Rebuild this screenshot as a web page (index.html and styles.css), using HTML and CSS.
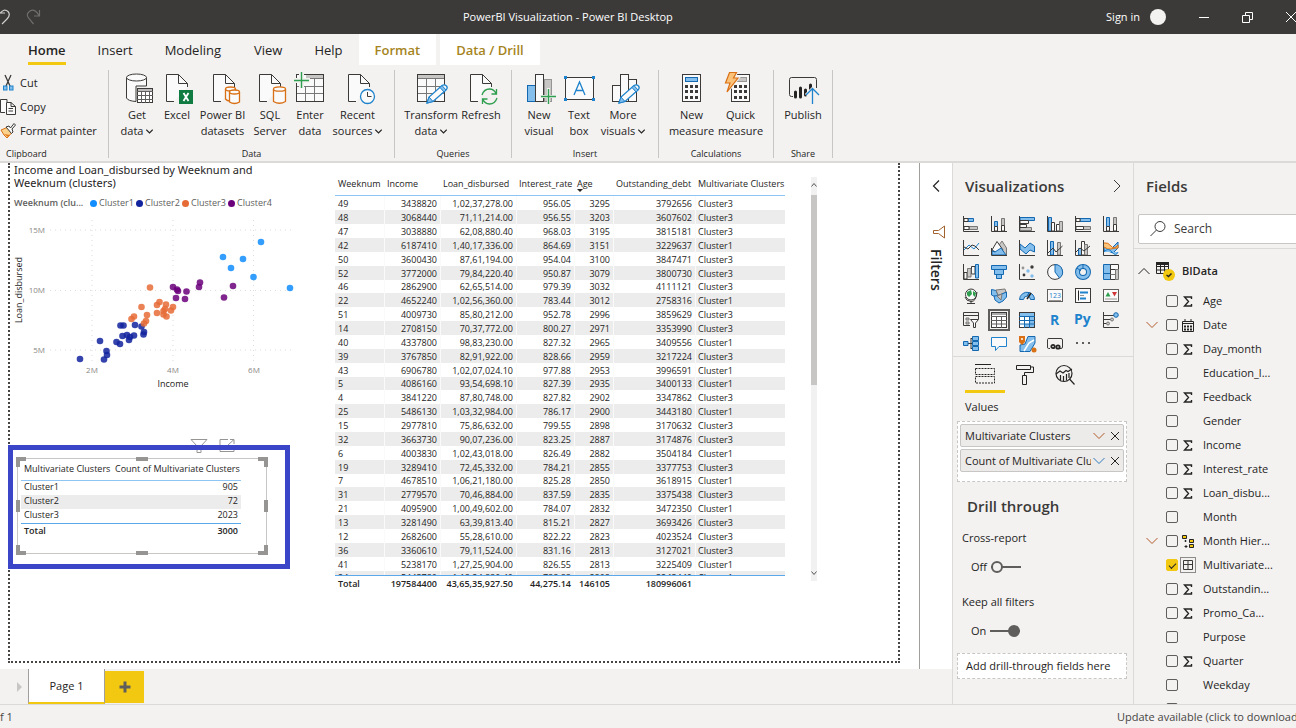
FILE: index.html
```html
<!DOCTYPE html>
<html lang="en">
<head>
<meta charset="utf-8">
<title>PowerBI Visualization - Power BI Desktop</title>
<link rel="stylesheet" href="styles.css">
</head>
<body>
<svg class="defs" aria-hidden="true">
  <symbol id="doc" viewBox="0 0 34 32"><path d="M14 29.5H6.500V2.500H18.500L27.500 11.500V15" fill="#fafafa" stroke="#3b3a39"/><path d="M18.500 2.500V11.500H27.500" fill="none" stroke="#3b3a39"/></symbol>
  <symbol id="pencil" viewBox="0 0 22 20"><path d="M1 19L3 13L16 1.500Q18.500 0 20.500 2Q22 4 20 6L7 17.500Z" fill="#fafafa" stroke="#1e83cc" stroke-width="1.300"/><path d="M3 13L7 17.500L1 19ZM16 1.500L20 6L18 8L14 3.500Z" fill="#83beec" stroke="#1e83cc"/></symbol>
  <symbol id="chev" viewBox="0 0 12 8"><path d="M.5 1L6 6.500L11.500 1" fill="none" stroke="currentColor"/></symbol>
  <symbol id="sigma" viewBox="0 0 10 11"><path d="M8.500 3V1H1.500L5.500 5.500L1.500 10H8.500V8" fill="none" stroke="#252423" stroke-width="1.400"/></symbol>
  <symbol id="cross" viewBox="0 0 10 10"><path d="M1 1L9 9M9 1L1 9" fill="none" stroke="currentColor"/></symbol>
</svg>

<header class="titlebar">
  <div class="history">
    <button class="plain" aria-label="Undo"><svg width="12" height="18"><path d="M0 5H5M0 5.500Q4 0 8 3.500Q11 7 7 11L2 16" fill="none" stroke="#d0cfce" stroke-width="1.200"/></svg></button>
    <button class="plain" aria-label="Redo"><svg width="16" height="18"><path d="M13.500 2V8H8M13 7.500Q9 0 4 3Q-.5 6 2.500 10L7.500 16" fill="none" stroke="#6f6e6d" stroke-width="1.200"/></svg></button>
  </div>
  <h1>PowerBI Visualization - Power BI Desktop</h1>
  <div class="window-tools">
    <button class="plain signin">Sign in</button><span class="avatar"></span>
    <button class="plain" aria-label="Minimize"><svg width="10" height="10"><path d="M0 5.500H10" stroke="#fff"/></svg></button>
    <button class="plain" aria-label="Restore"><svg width="11" height="11"><path d="M.5 3.500H7.500V10.500H.5ZM3.500 3V.5H10.500V7.500H8" fill="none" stroke="#fff"/></svg></button>
    <button class="plain" aria-label="Close"><svg width="10" height="10"><path d="M0 0L10 10M10 0L0 10" stroke="#fff"/></svg></button>
  </div>
</header>

<nav class="tabs">
  <button class="tab active"><span>Home</span></button><button class="tab">Insert</button><button class="tab">Modeling</button><button class="tab view">View</button><button class="tab">Help</button><button class="tab context">Format</button><button class="tab context">Data / Drill</button>
</nav>

<section class="ribbon">
  <div class="group clipboard">
    <div class="stack">
      <button class="row-tool"><svg width="16" height="16"><path d="M5 0L10 11M11 0L6 11" stroke="#3b3a39" stroke-width="1.300"/><rect x="3.500" y="11" width="3.500" height="4" fill="#83beec" stroke="#1e83cc"/><rect x="9.500" y="11" width="3.500" height="4" fill="#83beec" stroke="#1e83cc"/></svg>Cut</button>
      <button class="row-tool"><svg width="16" height="16"><path d="M5 13.500H.5V.5H7V3M6.500 3.500H11L15.500 7.500V15.500H6.500ZM11 3.500V7.500H15.500M8.500 9.500H13M8.500 12H13" fill="#fafafa" stroke="#3b3a39"/></svg>Copy</button>
      <button class="row-tool"><svg width="16" height="16"><path d="M1 7L7 4.500L11.500 10L7 15Q4 13 1 7Z" fill="#fbd28b" stroke="#d97015"/><path d="M4 11L8 14L10 12Z" fill="#e07a1c"/><path d="M6 4L9 3L10.500 5L14 .5L15.500 2L12 6L13 9L11.500 10.500Z" fill="#fafafa" stroke="#3b3a39"/></svg>Format painter</button>
    </div>
    <h2>Clipboard</h2>
  </div>
  <div class="group data">
    <div class="tools">
      <button class="tool"><svg width="34" height="32"><path d="M6.500 5.500V26Q8 29 16 29.500V14H26.500V5.500" fill="#fafafa" stroke="#3b3a39"/><ellipse cx="16.500" cy="5.500" rx="10" ry="3.500" fill="#fafafa" stroke="#3b3a39"/><rect x="17.500" y="16.500" width="15" height="14" fill="#fff" stroke="#3b3a39"/><path d="M18 18H32" stroke="#bbb" stroke-width="2"/><path d="M17 19.500H33M17 23.500H33M17 27.500H33M21.500 20V31M25.500 20V31M29.500 20V31" stroke="#605e5c"/></svg><span>Get</span><span>data <svg class="caret"><use href="#chev"/></svg></span></button>
      <button class="tool"><svg width="34" height="32"><use href="#doc"/><rect x="19" y="18" width="14" height="14" fill="#107c41"/><path d="M23.500 21L28.500 29M28.500 21L23.500 29" stroke="#fff" stroke-width="1.800"/></svg><span>Excel</span></button>
      <button class="tool pbi"><svg width="34" height="32"><use href="#doc" x="1"/><g fill="#fafafa" stroke="#d97015" stroke-width="1.300"><path d="M19.500 17V27Q21 29 24 29V17"/><ellipse cx="24.500" cy="17" rx="5" ry="2"/><path d="M23.500 20V30Q28.500 33 33.500 30V20"/><ellipse cx="28.500" cy="20" rx="5" ry="2"/></g></svg><span>Power BI</span><span>datasets</span></button>
      <button class="tool sql"><svg width="34" height="32"><use href="#doc"/><g fill="#fafafa" stroke="#d97015" stroke-width="1.300"><path d="M20.500 17V29.500Q26.500 33 32.500 29.500V17"/><ellipse cx="26.500" cy="17" rx="6" ry="2.200"/></g></svg><span>SQL</span><span>Server</span></button>
      <button class="tool enter"><svg width="34" height="32"><rect x="3.500" y="2.500" width="27" height="27" fill="#fafafa" stroke="#3b3a39"/><path d="M13 4.500H30" stroke="#c8c6c4" stroke-width="3"/><path d="M4 14.500H30M4 21.500H30M12.500 14V29M21.500 6V29M13 6.500H30" stroke="#777"/><path d="M0 8.500H17M8.500 0V16" stroke="#f3f2f1" stroke-width="5"/><path d="M1 8.500H16M8.500 0V16" stroke="#2f9e4f" stroke-width="1.400"/></svg><span>Enter</span><span>data</span></button>
      <button class="tool recent"><svg width="34" height="32"><use href="#doc" x="1"/><circle cx="26.500" cy="24.500" r="7" fill="#fafafa" stroke="#1e83cc" stroke-width="1.300"/><path d="M26.500 20V24.500H30.500" fill="none" stroke="#3b3a39"/></svg><span>Recent</span><span>sources <svg class="caret"><use href="#chev"/></svg></span></button>
    </div>
    <h2>Data</h2>
  </div>
  <div class="group queries">
    <div class="tools">
      <button class="tool transform"><svg width="34" height="32"><rect x="3.500" y="2.500" width="27" height="27" fill="#fafafa" stroke="#3b3a39"/><path d="M4 4.500H30" stroke="#c8c6c4" stroke-width="3"/><path d="M4 6.500H30M4 14.500H30M4 21.500H30M12.500 7V29M21.500 7V29" stroke="#777"/><use href="#pencil" x="12" y="12" width="22" height="20"/></svg><span>Transform</span><span>data <svg class="caret"><use href="#chev"/></svg></span></button>
      <button class="tool sql"><svg width="34" height="32"><use href="#doc"/><circle cx="25.500" cy="24.500" r="9" fill="#f3f2f1"/><path d="M18 23Q20 17 25.500 17Q30 17 32 21.500M32.500 17V22H27.500M33 26Q31 32 25.500 32Q20.500 31.500 19 27.500M18.500 32V27H23.500" fill="none" stroke="#2f9e4f" stroke-width="1.300"/></svg><span>Refresh</span></button>
    </div>
    <h2>Queries</h2>
  </div>
  <div class="group insert">
    <div class="tools">
      <button class="tool"><svg width="34" height="32"><rect x="22.500" y="7.500" width="7" height="22" fill="#c8c6c4" stroke="#979593"/><rect x="5.500" y="13.500" width="8" height="16" fill="#83beec" stroke="#1468b0"/><rect x="13.500" y="2.500" width="8" height="27" fill="#fafafa" stroke="#3b3a39"/><path d="M18 24.500H34M26.500 16V32" stroke="#f3f2f1" stroke-width="3"/><path d="M19 24.500H34M26.500 17V32" stroke="#2f9e4f" stroke-width="1.400"/></svg><span>New</span><span>visual</span></button>
      <button class="tool"><svg width="34" height="32"><rect x="3.500" y="5.500" width="28" height="22" fill="#fafafa" stroke="#3b3a39"/><g fill="#1e83cc"><path d="M2 4h3v3h-3zM30 4h3v3h-3zM2 26h3v3h-3zM30 26h3v3h-3z"/></g><path d="M12 23L17.500 10L23 23M14 18.500H21" fill="none" stroke="#1e83cc" stroke-width="1.300"/></svg><span>Text</span><span>box</span></button>
      <button class="tool more"><svg width="34" height="32"><g fill="#fafafa" stroke="#3b3a39"><rect x="22.500" y="7.500" width="8" height="22"/><rect x="6.500" y="13.500" width="8" height="16"/><rect x="14.500" y="2.500" width="8" height="27"/></g><use href="#pencil" x="12" y="12" width="22" height="20"/></svg><span>More</span><span>visuals <svg class="caret"><use href="#chev"/></svg></span></button>
    </div>
    <h2>Insert</h2>
  </div>
  <div class="group calc">
    <div class="tools">
      <button class="tool measure"><svg width="34" height="32"><rect x="7.500" y="2.500" width="18" height="27" fill="#fafafa" stroke="#3b3a39"/><rect x="10.500" y="5.500" width="12" height="4" fill="#83beec" stroke="#1468b0"/><path d="M10 14.500H23M10 19.500H23M10 25.500H23" stroke="#3b3a39" stroke-width="3" stroke-dasharray="3 2"/></svg><span>New</span><span>measure</span></button>
      <button class="tool measure"><svg width="34" height="32"><rect x="7.500" y="2.500" width="18" height="27" fill="#fafafa" stroke="#3b3a39"/><rect x="10.500" y="5.500" width="12" height="4" fill="#c8c6c4" stroke="#979593"/><path d="M10 14.500H23M10 19.500H23M10 25.500H23" stroke="#3b3a39" stroke-width="3" stroke-dasharray="3 2"/><path d="M5.500 .5H12.500L9.500 6H14L3 20L6 11H1.500Z" fill="#fbc37a" stroke="#f3f2f1" stroke-width="3"/><path d="M5.500 .5H12.500L9.500 6H14L3 20L6 11H1.500Z" fill="#fbc37a" stroke="#d97015" stroke-width="1.200"/></svg><span>Quick</span><span>measure</span></button>
    </div>
    <h2>Calculations</h2>
  </div>
  <div class="group share">
    <div class="tools">
      <button class="tool"><svg width="34" height="32"><path d="M7 24.500H5.500Q3.500 24.500 3.500 22.500V7.500Q3.500 5.500 5.500 5.500H28.500Q30.500 5.500 30.500 7.500V16" fill="none" stroke="#3b3a39"/><path d="M9.500 20V25M14.500 16V25M19.500 18V23M24.500 13V17" stroke="#252423" stroke-width="3" stroke-linecap="round"/><path d="M26.500 32V17M20 23L26.500 16.500L33 23" fill="none" stroke="#f3f2f1" stroke-width="3"/><path d="M26.500 32V17M20 23L26.500 16.500L33 23" fill="none" stroke="#1e83cc" stroke-width="1.300"/></svg><span>Publish</span></button>
    </div>
    <h2>Share</h2>
  </div>
</section>

<main class="workspace">
  <div class="report">
    <div class="upper">
      <div class="stage">
        <div class="page">
          <section class="visual scatter">
            <h3>Income and Loan_disbursed by Weeknum and Weeknum (clusters)</h3>
            <div class="legend"><b>Weeknum (clu...</b><span class="k c1">Cluster1</span><span class="k c2">Cluster2</span><span class="k c3">Cluster3</span><span class="k c4">Cluster4</span></div>
            <svg class="plot" viewBox="10 55 290 175" role="img" aria-label="Scatter chart">
              <path d="M50 70H294M50 130.500H294M50 190H294M92 60V204M173 60V204M253.500 60V204" stroke="#dcdcdc" stroke-dasharray="1 4" fill="none"/>
              <g class="tick"><text x="45" y="73">15M</text><text x="45" y="133">10M</text><text x="45" y="193">5M</text></g>
              <g class="tick mid"><text x="92" y="213">2M</text><text x="173" y="213">4M</text><text x="254" y="213">6M</text></g>
              <text class="axis" x="173" y="227">Income</text>
              <text class="axis" transform="translate(22 130) rotate(-90)">Loan_disbursed</text>
              <g class="d1"><circle cx="261" cy="82" r="3.300"/><circle cx="223" cy="97" r="3.300"/><circle cx="243" cy="99" r="3.300"/><circle cx="231" cy="108" r="3.300"/><circle cx="253.500" cy="117" r="3.300"/><circle cx="290" cy="128" r="3.300"/></g>
              <g class="d4"><circle cx="173" cy="127" r="3.300"/><circle cx="177" cy="129.500" r="3.300"/><circle cx="178" cy="131" r="3.300"/><circle cx="176" cy="138" r="3.300"/><circle cx="186.500" cy="131.500" r="3.300"/><circle cx="185" cy="139" r="3.300"/><circle cx="200" cy="122.500" r="3.300"/><circle cx="199" cy="127" r="3.300"/><circle cx="233" cy="126" r="3.300"/><circle cx="224" cy="137.500" r="3.300"/></g>
              <g class="d2"><circle cx="80" cy="199" r="3.300"/><circle cx="100" cy="181" r="3.300"/><circle cx="104" cy="199.500" r="3.300"/><circle cx="106.500" cy="191" r="3.300"/><circle cx="107" cy="195" r="3.300"/><circle cx="116.500" cy="182" r="3.300"/><circle cx="120" cy="184" r="3.300"/><circle cx="120.500" cy="165.500" r="3.300"/><circle cx="123.500" cy="165.500" r="3.300"/><circle cx="122.500" cy="176" r="3.300"/><circle cx="127" cy="175" r="3.300"/><circle cx="130" cy="177" r="3.300"/><circle cx="129" cy="180" r="3.300"/><circle cx="134" cy="175.500" r="3.300"/><circle cx="135" cy="165" r="3.300"/><circle cx="141.500" cy="166.500" r="3.300"/><circle cx="144" cy="172" r="3.300"/><circle cx="143.500" cy="174.500" r="3.300"/></g>
              <g class="d3"><circle cx="150" cy="127.500" r="3.300"/><circle cx="141.500" cy="147" r="3.300"/><circle cx="131.500" cy="159" r="3.300"/><circle cx="134" cy="156.500" r="3.300"/><circle cx="147" cy="155" r="3.300"/><circle cx="146" cy="161" r="3.300"/><circle cx="144" cy="163.500" r="3.300"/><circle cx="157" cy="145" r="3.300"/><circle cx="159.500" cy="142" r="3.300"/><circle cx="157" cy="153" r="3.300"/><circle cx="166" cy="144.500" r="3.300"/><circle cx="165" cy="149" r="3.300"/><circle cx="163.500" cy="151" r="3.300"/><circle cx="163.500" cy="154.500" r="3.300"/><circle cx="166.500" cy="156.500" r="3.300"/><circle cx="171" cy="150.500" r="3.300"/><circle cx="173" cy="147" r="3.300"/></g>
            </svg>
          </section>

          <section class="visual matrix">
            <div class="grid-scroll">
              <table class="grid">
                <colgroup><col class="w1"><col class="w2"><col class="w3"><col class="w4"><col class="w5"><col class="w6"><col class="w7"></colgroup>
                <thead><tr><th>Weeknum</th><th>Income</th><th>Loan_disbursed</th><th>Interest_rate</th><th class="sorted">Age</th><th>Outstanding_debt</th><th>Multivariate Clusters</th></tr></thead>
                <tbody>
                <tr><td>49</td><td>3438820</td><td>1,02,37,278.00</td><td>956.05</td><td>3295</td><td>3792656</td><td>Cluster3</td></tr>
                <tr><td>48</td><td>3068440</td><td>71,11,214.00</td><td>956.55</td><td>3203</td><td>3607602</td><td>Cluster3</td></tr>
                <tr><td>47</td><td>3038880</td><td>62,08,880.40</td><td>968.03</td><td>3195</td><td>3815181</td><td>Cluster3</td></tr>
                <tr><td>42</td><td>6187410</td><td>1,40,17,336.00</td><td>864.69</td><td>3151</td><td>3229637</td><td>Cluster1</td></tr>
                <tr><td>50</td><td>3600430</td><td>87,61,194.00</td><td>954.04</td><td>3100</td><td>3847471</td><td>Cluster3</td></tr>
                <tr><td>52</td><td>3772000</td><td>79,84,220.40</td><td>950.87</td><td>3079</td><td>3800730</td><td>Cluster3</td></tr>
                <tr><td>46</td><td>2862900</td><td>62,65,514.00</td><td>979.39</td><td>3032</td><td>4111121</td><td>Cluster3</td></tr>
                <tr><td>22</td><td>4652240</td><td>1,02,56,360.00</td><td>783.44</td><td>3012</td><td>2758316</td><td>Cluster1</td></tr>
                <tr><td>51</td><td>4009730</td><td>85,80,212.00</td><td>952.78</td><td>2996</td><td>3859629</td><td>Cluster3</td></tr>
                <tr><td>14</td><td>2708150</td><td>70,37,772.00</td><td>800.27</td><td>2971</td><td>3353990</td><td>Cluster3</td></tr>
                <tr><td>40</td><td>4337800</td><td>98,83,230.00</td><td>827.32</td><td>2965</td><td>3409556</td><td>Cluster1</td></tr>
                <tr><td>39</td><td>3767850</td><td>82,91,922.00</td><td>828.66</td><td>2959</td><td>3217224</td><td>Cluster3</td></tr>
                <tr><td>43</td><td>6906780</td><td>1,02,07,024.10</td><td>977.88</td><td>2953</td><td>3996591</td><td>Cluster1</td></tr>
                <tr><td>5</td><td>4086160</td><td>93,54,698.10</td><td>827.39</td><td>2935</td><td>3400133</td><td>Cluster1</td></tr>
                <tr><td>4</td><td>3841220</td><td>87,80,748.00</td><td>827.82</td><td>2902</td><td>3347862</td><td>Cluster3</td></tr>
                <tr><td>25</td><td>5486130</td><td>1,03,32,984.00</td><td>786.17</td><td>2900</td><td>3443180</td><td>Cluster1</td></tr>
                <tr><td>15</td><td>2977810</td><td>75,86,632.00</td><td>799.55</td><td>2898</td><td>3170632</td><td>Cluster3</td></tr>
                <tr><td>32</td><td>3663730</td><td>90,07,236.00</td><td>823.25</td><td>2887</td><td>3174876</td><td>Cluster3</td></tr>
                <tr><td>6</td><td>4003830</td><td>1,02,43,018.00</td><td>826.49</td><td>2882</td><td>3504184</td><td>Cluster1</td></tr>
                <tr><td>19</td><td>3289410</td><td>72,45,332.00</td><td>784.21</td><td>2855</td><td>3377753</td><td>Cluster3</td></tr>
                <tr><td>7</td><td>4678510</td><td>1,06,21,180.00</td><td>825.28</td><td>2850</td><td>3618915</td><td>Cluster1</td></tr>
                <tr><td>31</td><td>2779570</td><td>70,46,884.00</td><td>837.59</td><td>2835</td><td>3375438</td><td>Cluster3</td></tr>
                <tr><td>21</td><td>4095900</td><td>1,00,49,602.00</td><td>784.07</td><td>2832</td><td>3472350</td><td>Cluster1</td></tr>
                <tr><td>13</td><td>3281490</td><td>63,39,813.40</td><td>815.21</td><td>2827</td><td>3693426</td><td>Cluster3</td></tr>
                <tr><td>12</td><td>2682600</td><td>55,28,610.00</td><td>822.22</td><td>2823</td><td>4023524</td><td>Cluster3</td></tr>
                <tr><td>36</td><td>3360610</td><td>79,11,524.00</td><td>831.16</td><td>2813</td><td>3127021</td><td>Cluster3</td></tr>
                <tr><td>41</td><td>5238170</td><td>1,27,25,904.00</td><td>826.55</td><td>2813</td><td>3225409</td><td>Cluster1</td></tr>
                <tr><td>24</td><td>5443780</td><td>1,18,24,880.40</td><td>788.88</td><td>2808</td><td>3243440</td><td>Cluster1</td></tr>
                </tbody>
                <tfoot><tr><td>Total</td><td>197584400</td><td>43,65,35,927.50</td><td>44,275.14</td><td>146105</td><td>180996061</td><td></td></tr></tfoot>
              </table>
            </div>
            <div class="scrollbar"><svg width="6" height="4"><path d="M.5 3.500L3 .5L5.500 3.500" fill="none" stroke="#555"/></svg><i></i><svg width="6" height="4"><path d="M.5 .5L3 3.500L5.500 .5" fill="none" stroke="#555"/></svg></div>
          </section>

          <div class="visual-tools">
            <svg width="18" height="18"><path d="M1 3.500H17L11 10V16.500H7V10Z" fill="none" stroke="#979593"/></svg>
            <svg width="16" height="18"><path d="M9 3.500H1V15.500H15V11M11 3.500H15V8M15 3.500L9 9M5 12.500L8 9.500" fill="none" stroke="#979593"/></svg>
          </div>
          <section class="visual summary">
            <i class="handle nw"></i><i class="handle ne"></i><i class="handle sw"></i><i class="handle se"></i><i class="handle wide north"></i><i class="handle wide south"></i><i class="handle tall east"></i><i class="handle tall west"></i>
            <table class="grid small">
              <thead><tr><th>Multivariate Clusters</th><th>Count of Multivariate Clusters</th></tr></thead>
              <tbody><tr><td>Cluster1</td><td>905</td></tr><tr><td>Cluster2</td><td>72</td></tr><tr><td>Cluster3</td><td>2023</td></tr></tbody>
              <tfoot><tr><td>Total</td><td>3000</td></tr></tfoot>
            </table>
          </section>
          <div class="highlight"></div>
        </div>
      </div>
      <aside class="filters">
        <button class="plain" aria-label="Expand filters"><svg width="8" height="12"><path d="M7 .5L1.500 6L7 11.500" fill="none" stroke="#252423" stroke-width="1.200"/></svg></button>
        <svg class="funnel" width="12" height="14"><path d="M11.500 1V13L5.500 8.500H.5V5.500H5.500Z" fill="none" stroke="#a0622f"/></svg>
        <h2>Filters</h2>
      </aside>
    </div>
    <footer class="pagetabs">
      <span class="next"></span>
      <button class="pagetab">Page 1</button>
      <button class="add" aria-label="New page"><svg width="12" height="12"><path d="M6 .5V11.500M.5 6H11.500" stroke="#605e5c" stroke-width="3"/></svg></button>
    </footer>
  </div>

  <aside class="viz">
    <header class="pane-head"><h2>Visualizations</h2><button class="plain" aria-label="Collapse"><svg width="8" height="14"><path d="M1 1L7 7L1 13" fill="none" stroke="#3b3a39"/></svg></button></header>
    <div class="gallery">
      <svg viewBox="0 0 16 16"><path d="M5 2.500H10.500V5.500H5Z" class="b"/><path d="M6 10.500H14.500V13.500H6Z" class="g"/><path d="M1 2.500H5V5.500H1ZM1 10.500H6V13.500H1Z" class="f"/><path d="M.5 0V15.500H16" class="l"/></svg>
      <svg viewBox="0 0 16 16"><path d="M3.500 5.500H6.500V10.500H3.500Z" class="b"/><path d="M10.500 2.500H13.500V9.500H10.500Z" class="g"/><path d="M3.500 10.500H6.500V15H3.500ZM10.500 9.500H13.500V15H10.500Z" class="f"/><path d="M.5 0V15.500H16" class="l"/></svg>
      <svg viewBox="0 0 16 16"><path d="M1 1.500H15.500V4.500H1Z" class="b"/><path d="M1 4.500H9.500V7.500H1Z" class="f"/><path d="M1 11.500H12.500V14.500H1Z" class="g"/><path d="M1 8.500H7.500V11.500H1Z" class="f"/><path d="M.5 0V15.500H16" class="l"/></svg>
      <svg viewBox="0 0 16 16"><path d="M1.500 1.500H4.500V15H1.500Z" class="b"/><path d="M4.500 6.500H7.500V15H4.500ZM9.500 8.500H12.500V15H9.500Z" class="f"/><path d="M12.500 5.500H15.500V15H12.500Z" class="g"/><path d="M.5 0V15.500H16" class="l"/></svg>
      <svg viewBox="0 0 16 16"><path d="M5 2.500H15.500V5.500H5Z" class="b"/><path d="M8.500 10.500H15.500V13.500H8.500Z" class="g"/><path d="M1 2.500H5V5.500H1ZM1 10.500H8.500V13.500H1Z" class="f"/><path d="M.5 0V15.500H16" class="l"/></svg>
      <svg viewBox="0 0 16 16"><path d="M3.500 1.500H6.500V10.500H3.500Z" class="b"/><path d="M10.500 1.500H13.500V8.500H10.500Z" class="g"/><path d="M3.500 10.500H6.500V15H3.500ZM10.500 8.500H13.500V15H10.500Z" class="f"/><path d="M.5 0V15.500H16" class="l"/></svg>

      <svg viewBox="0 0 16 16"><path d="M1 10L6 5L11 9L16 3" fill="none" stroke="#1e83cc"/><path d="M1 7L5 9L9 5L12 6L16 10" class="l"/><path d="M.5 0V15.500H16" class="l"/></svg>
      <svg viewBox="0 0 16 16"><path d="M5 9L11 1L15.500 8V15H5Z" class="g"/><path d="M1 10L6 1.500L12 10L8 14Z" class="f"/><path d="M1 11L4 12L10 8L15 15H1Z" class="b"/><path d="M.5 8V15.500H16" class="l"/></svg>
      <svg viewBox="0 0 16 16"><path d="M1 4L6 8L11 3L15.500 6V12L11 10L7 14L1 9Z" class="b"/><path d="M.5 0V15.500H16" class="l"/></svg>
      <svg viewBox="0 0 16 16"><path d="M3.500 1.500H6.500V15H3.500Z" class="b"/><path d="M10.500 2.500H13.500V15H10.500Z" class="g"/><path d="M1 13L6 8L9 12L15.500 6" class="l"/><path d="M.5 0V15.500H16" class="l"/></svg>
      <svg viewBox="0 0 16 16"><path d="M3.500 8.500H6.500V15H3.500Z" class="b"/><path d="M6.500 1.500H9.500V15H6.500Z" class="f"/><path d="M9.500 4.500H12.500V15H9.500Z" class="g"/><path d="M1 12L5 8L9 11L15 6" class="l"/><path d="M.5 0V15.500H16" class="l"/></svg>
      <svg viewBox="0 0 16 16"><path d="M1 5H5L9 8L15 2V8L10 13L5 11H1Z" class="b"/><path d="M1 3Q5 2 8 6T15 5V8Q11 8 8 9T1 7" fill="#fbc37a" stroke="#d97015"/><path d="M1 12Q5 7 9 12T15 12" fill="#83beec" stroke="#1e83cc"/><path d="M.5 0V15.500H16" class="l"/></svg>

      <svg viewBox="0 0 16 16"><path d="M1 8.500H4V15H1ZM8.500 2.500H12V10H8.500Z" class="f"/><path d="M4.500 4.500H8V13H4.500Z" class="g"/><path d="M12.500 .5H15.500V14H12.500Z" class="b"/><path d="M.5 0V15.500H16" class="l"/></svg>
      <svg viewBox="0 0 16 16"><path d="M.5 1.500H15.500V5.500H.5ZM3.500 5.500H12.500V10.500H3.500ZM5.500 10.500H10.500V14.500H5.500Z" class="b"/></svg>
      <svg viewBox="0 0 16 16"><circle cx="4" cy="4" r="1.400" fill="#979593"/><circle cx="9" cy="7" r="1.700" fill="#83beec"/><circle cx="13" cy="3" r="1.700" fill="#3b3a39"/><circle cx="5" cy="11" r="1.400" fill="#3b3a39"/><circle cx="13" cy="12" r="1.700" fill="#83beec"/><path d="M.5 0V15.500H16" class="l"/></svg>
      <svg viewBox="0 0 16 16"><circle cx="8" cy="8" r="7.400" class="f"/><path d="M8 .6A7.400 7.400 0 0 1 12.500 14L8 8Z" class="b"/></svg>
      <svg viewBox="0 0 16 16"><circle cx="8" cy="8" r="5.500" fill="none" stroke="#1468b0" stroke-width="5"/><circle cx="8" cy="8" r="5.500" fill="none" stroke="#83beec" stroke-width="3"/><path d="M2 4L6 7M8 0V5" stroke="#1468b0"/></svg>
      <svg viewBox="0 0 16 16"><path d="M.5 .5H7.500V15.500H.5Z" class="b"/><path d="M7.500 .5H15.500V5.500H7.500ZM7.500 5.500H12.500V15.500H7.500Z" class="f"/><path d="M12.500 5.500H15.500V15.500H12.500ZM7.500 10.500H12.500" class="g"/><path d="M0 9.500H7" stroke="#1468b0"/></svg>

      <svg viewBox="0 0 16 16"><circle cx="8" cy="6.500" r="5.500" fill="#fafafa" stroke="#3b3a39"/><path d="M4 4L8 2L9 6L6 9L4 7ZM10 3L13 5L12 9L10 7Z" fill="#2f9e4f"/><path d="M2 9Q3 13 8 13.500T14 4M8 13V15.500M4 15.500H12" class="l"/></svg>
      <svg viewBox="0 0 16 16"><path d="M.5 1.500L5 2.500L7 7L5 9L.5 7Z" class="b"/><path d="M5 2L14 1L15 4L9 8L7 7Z" class="g"/><path d="M3 8L7 7.500L15.500 4V9L12 13L8 15L4 12Z" class="b"/><path d="M6 8L11 6L10 12Z" class="g"/></svg>
      <svg viewBox="0 0 16 16"><path d="M.5 11.500A7.500 7.500 0 0 1 10 4.500L8.500 8A4 4 0 0 0 4.500 11.500Z" class="b"/><path d="M10 4.500A7.500 7.500 0 0 1 15.500 11.500H11.500A4 4 0 0 0 8.500 8Z" class="b"/><path d="M8 11L12 5" stroke="#252423" stroke-width="1.500"/></svg>
      <svg viewBox="0 0 16 16"><rect x=".5" y="1.500" width="15" height="12" fill="#fafafa" stroke="#605e5c"/><text x="2" y="10" class="num">123</text><path d="M2 12.500H14" stroke="#979593"/></svg>
      <svg viewBox="0 0 16 16"><rect x=".5" y=".5" width="15" height="14" fill="#fafafa" stroke="#3b3a39"/><path d="M3.500 2.500V12.500" stroke="#252423"/><path d="M5 4.500H13M5 10.500H11" stroke="#1e83cc" stroke-width="2"/><path d="M5 7.500H9" stroke="#979593"/></svg>
      <svg viewBox="0 0 16 16"><rect x=".5" y="1.500" width="15" height="12" fill="#fafafa" stroke="#605e5c"/><path d="M2.500 8.500L5 4L7.500 8.500Z" fill="#2f9e4f"/><path d="M9 4H14L11.500 8.500Z" fill="#d13438"/><path d="M2 11H14" stroke="#979593"/></svg>

      <svg viewBox="0 0 16 16"><path d="M7 13.500H.5V.5H15.500V7M.5 3.500H15.500" class="l"/><path d="M3 6H6V8H3ZM3 10H6V12H3Z" class="g"/><path d="M7.500 7.500H15.500L12.500 11V15.500H10.500V11Z" class="f"/></svg>
      <svg class="picked" viewBox="0 0 16 16"><rect x=".5" y=".5" width="15" height="15" fill="#fff" stroke="#3b3a39"/><path d="M1 2H15" stroke="#aaa" stroke-width="2"/><path d="M0 4.500H16M0 8.500H16M0 12H16M5.500 4V16M10.500 4V16" stroke="#605e5c"/></svg>
      <svg viewBox="0 0 16 16"><rect x=".5" y=".5" width="15" height="15" fill="#fff" stroke="#3b3a39"/><path d="M1 1H15V4H1ZM10.500 4H15V15H10.500ZM5.500 12H10.500V15H5.500Z" fill="#83beec"/><path d="M0 4.500H16M0 8.500H16M0 12H16M5.500 4V16M10.500 4V16" stroke="#1468b0"/></svg>
      <svg viewBox="0 0 16 16"><text x="3" y="13" class="letter">R</text></svg>
      <svg viewBox="0 0 16 16"><text x="-1" y="12" class="letter">Py</text></svg>
      <svg viewBox="0 0 16 16"><path d="M.5 0V15.500H16M1 3.500H12M1 7.500H8M1 11.500H4" class="l"/><circle cx="13" cy="3" r="2.300" fill="#83beec" stroke="#1468b0"/><circle cx="9" cy="7.500" r="1.500" class="g"/><circle cx="5" cy="11.500" r="1.500" class="g"/></svg>

      <svg viewBox="0 0 16 16"><path d="M4 7.500H8M8 2V13M8 2.500H10M8 7.500H10M8 12.500H10" class="l"/><path d="M.5 5.500H5V9.500H.5ZM9.500 .5H15.500V4.500H9.500ZM9.500 5.500H15.500V9.500H9.500ZM9.500 10.500H15.500V14.500H9.500Z" class="b"/></svg>
      <svg viewBox="0 0 16 16"><path d="M.5 1.500H15.500V10.500H8L4.500 14.500V10.500H.5Z" fill="#fafafa" stroke="#1e83cc"/></svg>
      <svg viewBox="0 0 16 16"><path d="M1 9L6 8L9 .5H16V7L11 15.500H1Z" class="b"/><path d="M5 15L10 7L15 4" fill="none" stroke="#fff" stroke-width="1.500"/><path d="M0 0H6V6L3 9L0 6Z" fill="#d97015"/><circle cx="3" cy="3" r="1" fill="#fff"/><circle cx="15" cy="14" r="2.500" fill="#d97015"/></svg>
      <svg viewBox="0 0 16 16"><path d="M3 12.500H1.500Q.5 12.500 .5 11V3.500Q.5 2.500 2 2.500H14Q15.500 2.500 15.500 4V11Q15.500 12.500 14 12.500H13" class="l"/><circle cx="6" cy="10.500" r="1.700" fill="#fff" stroke="#252423" stroke-width="1.800"/><circle cx="11" cy="11" r="1.700" fill="#fff" stroke="#252423" stroke-width="1.800"/></svg>
      <svg viewBox="0 0 16 16"><path d="M1 6h2v2h-2zM7 6h2v2h-2zM13 6h2v2h-2z" fill="#605e5c"/></svg>
    </div>

    <div class="modes">
      <button class="plain mode on" aria-label="Fields"><svg width="20" height="20"><path d="M0 .5H16" stroke="#252423"/><path d="M.5 4.500H19.500V10.500H.5ZM.5 12.500H19.500V19H.5Z" fill="none" stroke="#252423" stroke-dasharray="2 1"/></svg></button>
      <button class="plain mode" aria-label="Format"><svg width="20" height="22"><path d="M1.500 1.500H15.500V5.500H1.500ZM15.500 3H18.500V8.500H9.500V11M7.500 11.500H11.500V20.500H7.500Z" fill="none" stroke="#252423"/></svg></button>
      <button class="plain mode" aria-label="Analytics"><svg width="20" height="20"><circle cx="9" cy="8.500" r="8" fill="none" stroke="#252423" stroke-width="1.200"/><path d="M1 9L5 6L8 8L11 5.500L13 6.500L17 4M5.500 10V15M8.500 11V16M11.500 9V15.500M14 8V13M14.500 14L19.500 19.500" fill="none" stroke="#252423" stroke-width="1.200"/></svg></button>
    </div>
    <h3 class="label">Values</h3>
    <div class="well">
      <div class="pill"><span>Multivariate Clusters</span><svg class="dn"><use href="#chev"/></svg><svg class="x"><use href="#cross"/></svg></div>
      <div class="pill"><span>Count of Multivariate Clusters</span><svg class="dn blue"><use href="#chev"/></svg><svg class="x"><use href="#cross"/></svg></div>
    </div>
    <h2 class="through">Drill through</h2>
    <h3 class="sub">Cross-report</h3>
    <label class="toggle">Off <input type="checkbox"></label>
    <h3 class="sub">Keep all filters</h3>
    <label class="toggle">On <input type="checkbox" checked></label>
    <div class="drop">Add drill-through fields here</div>
  </aside>

  <aside class="fields">
    <header class="pane-head"><h2>Fields</h2></header>
    <label class="search"><svg width="16" height="16"><circle cx="10" cy="5.500" r="5" fill="none" stroke="#3b3a39"/><path d="M6.500 9L.5 15" stroke="#3b3a39"/></svg><input type="text" placeholder="Search" aria-label="Search"></label>
    <div class="tree">
      <div class="root"><svg class="up"><use href="#chev"/></svg><svg width="20" height="20"><path d="M.5 1.500H12.500V12.500H.5ZM0 5.500H13M0 9H13M4.500 4V13M8.500 4V13" fill="none" stroke="#252423"/><path d="M0 2.500H13" stroke="#252423" stroke-width="3"/><circle cx="13" cy="14" r="6" fill="#f2c811"/><path d="M10.500 14L12.500 15.500L15.500 12.500" fill="none" stroke="#252423" stroke-width="1.500"/></svg><b>BIData</b></div>
      <label class="field"><i></i><input type="checkbox"><svg class="kind"><use href="#sigma"/></svg>Age</label>
      <label class="field"><svg class="dn"><use href="#chev"/></svg><input type="checkbox"><svg class="cal" width="12" height="13"><path d="M.5 2.500H11.500V12.500H.5ZM0 4.500H12M3 0V3M9 0V3" fill="none" stroke="#252423"/><path d="M2 7.500H10M2 10.500H10" stroke="#252423" stroke-width="2" stroke-dasharray="2 1"/></svg>Date</label>
      <label class="field"><i></i><input type="checkbox"><svg class="kind"><use href="#sigma"/></svg>Day_month</label>
      <label class="field"><i></i><input type="checkbox"><i class="kind"></i>Education_l...</label>
      <label class="field"><i></i><input type="checkbox"><svg class="kind"><use href="#sigma"/></svg>Feedback</label>
      <label class="field"><i></i><input type="checkbox"><i class="kind"></i>Gender</label>
      <label class="field"><i></i><input type="checkbox"><svg class="kind"><use href="#sigma"/></svg>Income</label>
      <label class="field"><i></i><input type="checkbox"><svg class="kind"><use href="#sigma"/></svg>Interest_rate</label>
      <label class="field"><i></i><input type="checkbox"><svg class="kind"><use href="#sigma"/></svg>Loan_disbu...</label>
      <label class="field"><i></i><input type="checkbox"><i class="kind"></i>Month</label>
      <label class="field"><svg class="dn"><use href="#chev"/></svg><input type="checkbox"><svg class="cal" width="12" height="13"><path d="M.5 .5H4.500V3.500H.5ZM7.500 4.500H11.500V7.500H7.500ZM7.500 9.500H11.500V12.500H7.500Z" fill="#f2c811" stroke="#252423"/><path d="M2.500 6H4.500M3.500 5V7M2.500 11.500H5.500M4 10V13" stroke="#252423"/></svg>Month Hier...</label>
      <label class="field"><i></i><input type="checkbox" checked><svg class="cal focus" width="16" height="16"><rect x=".5" y=".5" width="15" height="15" fill="none" stroke="#252423" stroke-dasharray="1 1"/><path d="M3.500 3.500H12.500V12.500H3.500ZM3 7.500H13M8 4V13" fill="none" stroke="#3b3a39"/></svg>Multivariate...</label>
      <label class="field"><i></i><input type="checkbox"><svg class="kind"><use href="#sigma"/></svg>Outstandin...</label>
      <label class="field"><i></i><input type="checkbox"><svg class="kind"><use href="#sigma"/></svg>Promo_Ca...</label>
      <label class="field"><i></i><input type="checkbox"><i class="kind"></i>Purpose</label>
      <label class="field"><i></i><input type="checkbox"><svg class="kind"><use href="#sigma"/></svg>Quarter</label>
      <label class="field"><i></i><input type="checkbox"><i class="kind"></i>Weekday</label>
      <label class="field"><i></i><input type="checkbox" aria-label="Next field"></label>
    </div>
  </aside>
</main>

<footer class="status"><span>f 1</span><a href="#">Update available (click to download)</a></footer>
</body>
</html>
```

FILE: styles.css
```css
*, *::before, *::after { box-sizing: border-box; }
body {
  margin: 0;
  height: 100vh;
  display: flex;
  flex-direction: column;
  overflow: hidden;
  font: 11px/16px "Open Sans", "Noto Sans", sans-serif;
  color: #252423;
  background: #f3f2f1;
}
h1, h2, h3 { margin: 0; font-weight: 400; font-size: 11px; }
button { font: inherit; color: inherit; background: none; border: 0; padding: 0; margin: 0; }
svg { display: block; flex: none; overflow: visible; }
i { display: block; flex: none; }
.defs { width: 0; height: 0; position: absolute; }
.plain { display: block; }

/* title bar */
.titlebar {
  flex: none;
  height: 34px;
  display: grid;
  grid-template-columns: 1fr auto 1fr;
  align-items: center;
  background: #3b3a39;
  color: #fff;
}
.titlebar { grid-template-columns: 463px auto 1fr; }
.history { display: flex; gap: 14px; }
.window-tools { display: flex; align-items: center; justify-content: flex-end; gap: 33px; }
.signin { margin-right: -23px; }
.avatar { width: 16px; height: 16px; border-radius: 50%; background: #f3f2f1; }

/* ribbon */
.tabs { flex: none; height: 31px; display: flex; padding-left: 12px; font-size: 13px; }
.tab { padding: 0 16px; }
.tab.view { padding-left: 17px; }
.tab.active { font-weight: 600; }
.tab.active span { display: block; height: 31px; padding-top: 8px; border-bottom: 3px solid #f2c811; line-height: 16px; }
.tab.context { margin-right: 4px; background: #fff; color: #a5841d; font-weight: 600; padding: 0 16px; }
.ribbon { flex: none; height: 98px; display: flex; padding-top: 5px; border-bottom: 2px solid #dcdad8; }
.group {
  height: 88px;
  display: flex;
  flex-direction: column;
  justify-content: space-between;
  border-right: 1px solid #c8c6c4;
}
.group h2 { font-size: 9px; line-height: 9px; text-align: center; }
.clipboard { width: 109px; }
.clipboard h2 { text-align: left; padding-left: 6px; }
.data { width: 286px; }
.queries { width: 117px; }
.insert { width: 147px; }
.calc { width: 115px; }
.share { width: 59px; }
.stack { display: flex; flex-direction: column; gap: 8px; padding-top: 5px; }
.row-tool { display: flex; align-items: center; gap: 4px; height: 16px; white-space: nowrap; }
.tools { display: flex; justify-content: center; padding-top: 2px; }
.data .tools { padding-left: 1px; }
.insert .tools { justify-content: flex-start; padding-left: 7px; }
.tool { width: 40px; display: flex; flex-direction: column; align-items: center; white-space: nowrap; }
.tool > svg { margin-bottom: 3px; }
.tool span { display: flex; align-items: center; gap: 3px; }
.caret { width: 7px; height: 5px; stroke-width: 2px; }
.pbi { width: 51px; }
.sql { width: 44px; }
.enter { width: 36px; }
.recent { width: 59px; }
.transform { width: 56px; }
.more { width: 48px; }
.measure { width: 49px; }

/* workspace */
.workspace { flex: 1; min-height: 0; display: flex; }
.report { flex: 1; min-width: 0; display: flex; flex-direction: column; }
.upper { flex: 1; min-height: 0; display: flex; }
.stage { flex: 1; padding: 0 19px 6px 8px; background: #fff; }
.page { position: relative; height: 100%; border: 2px dotted #484644; border-top: 0; }
.visual { position: absolute; }

.scatter { left: 0; top: 0; width: 290px; }
.scatter h3 { font: 11px/13px "Noto Sans", sans-serif; padding-left: 4px; }
.legend { display: flex; height: 12px; margin: 8px 0 0 4px; font-size: 9px; line-height: 12px; color: #605e5c; white-space: nowrap; }
.legend b { width: 76px; font-weight: 600; }
.k { display: flex; align-items: center; gap: 2px; width: 46px; color: #605e5c; }
.k::before { content: ""; width: 7px; height: 7px; border-radius: 50%; }
.c1::before { background: #118dff; }
.c2::before { background: #12239e; }
.c3::before { background: #e66c37; }
.c4::before { background: #6b007b; }
.plot { width: 290px; height: 175px; margin-top: 6px; font-size: 9px; }
.tick { fill: #8a8886; text-anchor: end; font-size: 8px; }
.mid, .axis { text-anchor: middle; }
.axis { fill: #252423; }
.plot circle { opacity: .85; }
.d1 { fill: #118dff; }
.d2 { fill: #12239e; }
.d3 { fill: #e66c37; }
.d4 { fill: #6b007b; }

.matrix { left: 325px; top: 14px; display: flex; gap: 26px; height: 413px; }
.grid-scroll { width: 450px; overflow: hidden; }
.grid { border-collapse: separate; border-spacing: 0; table-layout: fixed; width: 450px; font-size: 9px; line-height: 13px; white-space: nowrap; }
.grid th { height: 19px; padding: 0 3px 5px; font-weight: 400; text-align: left; border-bottom: 1px solid #8ec5f5; }
.grid td { height: 14px; padding: 0 3px; text-align: right; }
.grid tbody tr:nth-child(7n) td { height: 13px; }
.grid tbody tr:nth-child(even) { background: #ececec; }
.grid td + td { border-left: 1px solid #fafafa; padding-left: 2px; }
.grid td:first-child, .grid td:nth-child(7) { text-align: left; }
.grid tfoot tr td { position: sticky; bottom: 0; height: 15px; background: #fff; font-weight: 600; border: 0; border-top: 1px solid #5aa7ea; }
.w1 { width: 49px; }
.w2 { width: 56px; }
.w3 { width: 76px; }
.w4 { width: 58px; }
.w5 { width: 39px; }
.w6 { width: 82px; }
.w7 { width: 90px; }
.sorted { position: relative; }
.sorted::after { content: ""; position: absolute; left: 3px; bottom: 3px; border: 3px solid transparent; border-top-color: #252423; border-bottom: 0; }
.scrollbar { width: 6px; height: 404px; display: flex; flex-direction: column; align-items: center; background: #f1f1f1; padding: 6px 0; }
.scrollbar i { width: 6px; height: 190px; margin: 8px 0 auto; background: #c8c6c4; }

.visual-tools { position: absolute; left: 180px; top: 273px; display: flex; gap: 11px; }
.summary { left: 7px; top: 295px; width: 250px; height: 96px; padding: 3px; border: 1px solid #c8c6c4; }
.grid.small { width: 220px; line-height: 12px; }
.small th { height: 19px; padding-bottom: 5px; }
.small th:last-child { padding-left: 8px; }
.small th:first-child { width: 86px; }
.small td + td { border-left: 0; }
.small tbody td { padding-bottom: 2px; }
.small.grid tfoot tr td { height: 14px; }
.handle { position: absolute; width: 10px; height: 10px; border: 0 solid #979593; }
.nw { left: -2px; top: -2px; border-width: 4px 0 0 4px; }
.ne { right: -2px; top: -2px; border-width: 4px 4px 0 0; }
.sw { left: -2px; bottom: -2px; border-width: 0 0 4px 4px; }
.se { right: -2px; bottom: -2px; border-width: 0 4px 4px 0; }
.wide { left: 50%; width: 12px; height: 4px; margin-left: -6px; background: #979593; }
.tall { top: 50%; width: 4px; height: 12px; margin-top: -6px; background: #979593; }
.north { top: -2px; }
.south { bottom: -2px; }
.east { right: -2px; }
.west { left: -2px; }
.highlight { position: absolute; left: -2px; top: 282px; width: 282px; height: 124px; border: 5px solid #3b45c8; }

.filters { width: 33px; display: flex; flex-direction: column; align-items: center; padding-top: 17px; background: #fff; border-left: 1px solid #a19f9d; }
.funnel { margin: 33px 0 10px 5px; }
.filters h2 { writing-mode: vertical-rl; font-size: 14px; font-weight: 600; line-height: 18px; }
.pagetabs { flex: none; height: 35px; display: flex; align-items: flex-start; }
.next { margin: 13px 6px 0 17px; border: 5px solid transparent; border-left-color: #c8c6c4; border-right: 0; }
.pagetab { width: 77px; height: 35px; background: #fff; border: 1px solid #a19f9d; border-width: 0 1px 2px; border-bottom-color: #f2c811; }
.add { width: 39px; height: 32px; margin-top: 2px; display: grid; place-items: center; background: #f2c811; }

/* panes */
.viz { width: 181px; border-left: 1px solid #dcdad8; }
.fields { width: 163px; border-left: 1px solid #dcdad8; overflow: hidden; }
.pane-head { display: flex; justify-content: space-between; align-items: center; height: 46px; padding: 0 12px; }
.pane-head h2, .through { font-size: 15px; line-height: 20px; font-weight: 600; color: #3b3a39; }
.gallery { display: grid; grid-template-columns: repeat(6, 28px); grid-auto-rows: 24px; place-items: center; padding: 3px 0 0 4px; height: 148px; border-bottom: 1px solid #dcdad8; }
.gallery svg { width: 16px; height: 16px; }
.gallery .picked { outline: 2px solid #605e5c; outline-offset: 1px; }
.b { fill: #83beec; stroke: #1468b0; }
.g { fill: #c8c6c4; stroke: #797775; }
.f { fill: #fafafa; stroke: #3b3a39; }
.l { fill: none; stroke: #3b3a39; }
.num { font-size: 7px; fill: #1e83cc; }
.letter { font-size: 14px; font-weight: 700; fill: #1e83cc; }
.modes { display: flex; padding-left: 12px; }
.mode { width: 40px; height: 36px; display: grid; place-items: center; }
.mode.on { border-bottom: 3px solid #f2c811; }
.label { margin: 6px 0 6px 12px; }
.well { width: 170px; height: 61px; margin-left: 4px; padding: 2px; display: flex; flex-direction: column; gap: 2px; background: #fff; border: 1px dashed #c8c6c4; }
.pill { display: flex; align-items: center; gap: 5px; height: 23px; padding: 0 3px 0 4px; background: #edebe9; border: 1px solid #c8c6c4; border-radius: 2px; }
.pill span { flex: 1; overflow: hidden; white-space: nowrap; margin-right: -3px; }
.dn { width: 12px; height: 8px; color: #b05a2a; }
.blue { color: #2f78b8; }
.x { width: 10px; height: 10px; }
.through { margin: 14px 0 14px 14px; }
.sub { margin-left: 9px; height: 16px; }
.toggle { display: flex; align-items: center; gap: 4px; height: 16px; margin: 13px 0 19px 18px; }
.toggle input { appearance: none; position: relative; width: 30px; height: 12px; margin: 0; background: linear-gradient(#605e5c, #605e5c) center / 100% 2px no-repeat; }
.toggle input::before { content: ""; position: absolute; left: 0; top: 0; width: 12px; height: 12px; border: 2px solid #605e5c; border-radius: 50%; background: #f3f2f1; }
.toggle input:checked::before { left: auto; right: 0; background: #605e5c; }
.drop { width: 170px; height: 26px; margin: -5px 0 0 4px; padding: 4px 8px; background: #fff; border: 1px dashed #c8c6c4; white-space: nowrap; }
.search { display: flex; align-items: center; gap: 8px; width: 180px; height: 30px; margin: 5px 0 0 4px; padding-left: 11px; background: #fff; border: 1px solid #c8c6c4; border-radius: 2px; }
.search input { width: 100px; border: 0; padding: 0; background: none; font: 12px/16px "Open Sans", sans-serif; color: #3b3a39; outline: 0; }
.search input::placeholder { color: #3b3a39; }
.tree { margin-top: 4px; padding: 14px 0 0 4px; border-top: 1px solid #dcdad8; }
.root { display: flex; align-items: center; gap: 6px; height: 24px; }
.root b { font-weight: 600; }
.up { width: 12px; height: 8px; transform: rotate(180deg); }
.field { display: flex; align-items: center; height: 24px; padding-left: 8px; white-space: nowrap; }
.root + .field { margin-top: 6px; }
.tree { padding-top: 10px; }
.field > :first-child { width: 12px; margin-right: 8px; }
.field input { appearance: none; flex: none; width: 12px; height: 12px; margin: 0; border: 1px solid #605e5c; border-radius: 2px; background: #f3f2f1; }
.field input:checked { border-color: #f2c811; background: #f2c811; display: grid; place-items: center; }
.field input:checked::before { content: ""; width: 7px; height: 4px; border: 1px solid #252423; border-width: 0 0 1px 1px; transform: rotate(-45deg); }
.kind { width: 10px; height: 11px; margin: 0 10px 0 5px; }
.cal { margin: 0 9px 0 4px; }
.cal.focus { margin: 0 7px 0 2px; }

.status { flex: none; height: 24px; display: flex; justify-content: space-between; align-items: center; border-top: 1px solid #dcdad8; color: #484644; }
.status a { width: 179px; overflow: hidden; white-space: nowrap; color: inherit; text-decoration: none; }
```
